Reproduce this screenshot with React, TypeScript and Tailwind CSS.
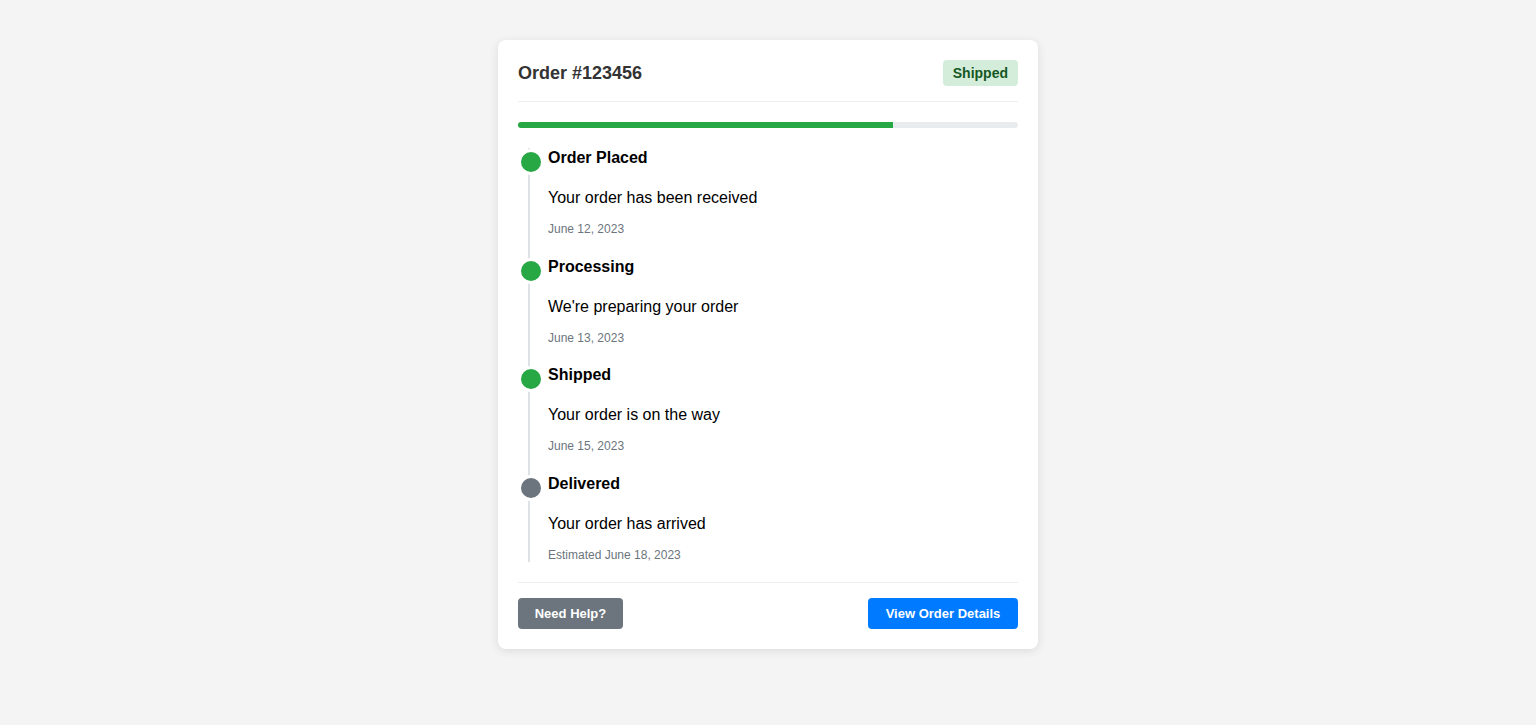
import React from 'react';

type Step = {
  title: string;
  text: string;
  date: string;
  done: boolean;
};

const steps: Step[] = [
  { title: 'Order Placed', text: 'Your order has been received', date: 'June 12, 2023', done: true },
  { title: 'Processing', text: "We're preparing your order", date: 'June 13, 2023', done: true },
  { title: 'Shipped', text: 'Your order is on the way', date: 'June 15, 2023', done: true },
  { title: 'Delivered', text: 'Your order has arrived', date: 'Estimated June 18, 2023', done: false },
];

export default function App() {
  return (
    <div
      className="min-h-screen bg-[#f4f4f4] pt-[40px] flex justify-center"
      style={{ fontFamily: '"Liberation Sans", Arial, sans-serif' }}
    >
      <div className="w-[540px] h-fit bg-white rounded-[8px] shadow-[0_2px_10px_rgba(0,0,0,0.1)] p-[20px]">
        {/* header */}
        <div className="flex items-center justify-between pb-[15px] border-b border-[#eeeeee]">
          <h2 className="text-[18px] leading-[21px] font-bold text-[#333333]">Order #123456</h2>
          <span className="bg-[#d4edda] text-[#155724] text-[14px] leading-[16px] font-bold px-[10px] py-[5px] rounded-[4px]">
            Shipped
          </span>
        </div>

        {/* progress */}
        <div className="mt-[20px] h-[6px] rounded-[3px] bg-[#e9ecef] overflow-hidden">
          <div className="h-full w-3/4 bg-[#28a745]" />
        </div>

        {/* timeline */}
        <div className="mt-[20px]">
          {steps.map((s, i) => (
            <div key={s.title} className={`relative pl-[30px] ${i < steps.length - 1 ? 'pb-[20.5px]' : ''}`}>
              <div className="absolute left-[10px] top-0 bottom-0 w-[2px] bg-[#dee2e6]" />
              <div
                className={`absolute left-0 top-[1px] w-[26px] h-[26px] rounded-full border-[3px] border-white ${
                  s.done ? 'bg-[#28a745]' : 'bg-[#6c757d]'
                }`}
              />
              <h4 className="pt-[1px] text-[16px] leading-[18px] font-bold text-black">{s.title}</h4>
              <p className="mt-[19px] text-[16px] leading-[24px] text-black">{s.text}</p>
              <p className="mt-[12px] text-[12px] leading-[14px] text-[#6c757d]">{s.date}</p>
            </div>
          ))}
        </div>

        {/* footer */}
        <div className="mt-[20px] pt-[15px] border-t border-[#eeeeee] flex items-center justify-between">
          <button className="w-[105px] text-center bg-[#6c757d] text-white text-[13px] leading-[15px] font-bold py-[8px] rounded-[4px]">
            Need Help?
          </button>
          <button className="w-[150px] text-center bg-[#007bff] text-white text-[13px] leading-[15px] font-bold py-[8px] rounded-[4px]">
            View Order Details
          </button>
        </div>
      </div>
    </div>
  );
}
